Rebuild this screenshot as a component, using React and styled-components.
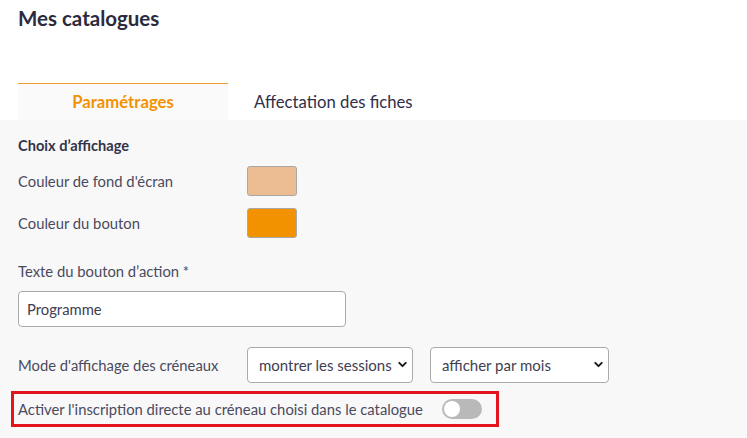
import styled, { createGlobalStyle } from "styled-components";
import { ChevronDown } from "lucide-react";

const GlobalStyle = createGlobalStyle`
  html, body {
    margin: 0;
    padding: 0;
    background: #ffffff;
    font-family: Lato, "Open Sans", sans-serif;
    color: #3e3e52;
  }
  * { box-sizing: border-box; }
`;

const App = () => {
  return (
    <>
      <GlobalStyle />
      <Page>
        <Title>Mes catalogues</Title>
        <Tabs>
          <Tab $active>Paramétrages</Tab>
          <Tab>Affectation des fiches</Tab>
        </Tabs>
        <Panel>
          <SectionTitle>Choix d’affichage</SectionTitle>
          <ColorRow>
            <Label>Couleur de fond d'écran</Label>
            <Swatch $color="#ecbc92" />
          </ColorRow>
          <ColorRow>
            <Label>Couleur du bouton</Label>
            <Swatch $color="#f39200" />
          </ColorRow>
          <FieldBlock>
            <Label>Texte du bouton d’action *</Label>
            <TextInput defaultValue="Programme" />
          </FieldBlock>
          <ModeRow>
            <Label>Mode d'affichage des créneaux</Label>
            <SelectWrap $width={166}>
              <Select defaultValue="sessions">
                <option value="sessions">montrer les sessions</option>
              </Select>
              <Chevron size={13} strokeWidth={3.6} />
            </SelectWrap>
            <SelectWrap $width={179}>
              <Select defaultValue="mois">
                <option value="mois">afficher par mois</option>
              </Select>
              <Chevron size={13} strokeWidth={3.6} />
            </SelectWrap>
          </ModeRow>
          <Highlight>
            <Label>Activer l'inscription directe au créneau choisi dans le catalogue</Label>
            <Toggle />
          </Highlight>
        </Panel>
      </Page>
    </>
  );
};

const Page = styled.div`
  width: 747px;
  height: 438px;
  display: flex;
  flex-direction: column;
  overflow: hidden;
`;

const Title = styled.h1`
  margin: 0;
  padding: 5px 18px 0;
  height: 83px;
  font-size: 20.5px;
  line-height: 26px;
  font-weight: 700;
  color: #2b2b40;
`;

const Tabs = styled.div`
  display: flex;
  padding: 0 18px;
`;

const Tab = styled.div`
  height: 37px;
  display: flex;
  align-items: center;
  justify-content: center;
  font-size: 16.7px;
  padding: ${(p) => (p.$active ? "0" : "0 26px")};
  width: ${(p) => (p.$active ? "210px" : "auto")};
  border-top: 1px solid ${(p) => (p.$active ? "#ee9a30" : "transparent")};
  background: ${(p) => (p.$active ? "#fafafa" : "#ffffff")};
  color: ${(p) => (p.$active ? "#f39200" : "#2f2f48")};
  font-weight: ${(p) => (p.$active ? 700 : 400)};
`;

const Panel = styled.div`
  flex: 1;
  background: #f8f8f8;
  padding: 16px 18px 0;
  display: flex;
  flex-direction: column;
`;

const SectionTitle = styled.div`
  font-size: 14.6px;
  line-height: 20px;
  font-weight: 700;
  color: #33334a;
  margin-bottom: 10px;
`;

const Label = styled.span`
  font-size: 14.8px;
  line-height: 20px;
  color: #4a4a5e;
  white-space: nowrap;
`;

const ColorRow = styled.div`
  display: grid;
  grid-template-columns: 229px 50px;
  align-items: center;
  margin-bottom: 12px;
`;

const Swatch = styled.div`
  width: 50px;
  height: 30px;
  border: 1px solid #a8a8a8;
  border-radius: 3px;
  background: ${(p) => p.$color};
`;

const FieldBlock = styled.div`
  display: flex;
  flex-direction: column;
  gap: 10px;
  margin-top: 11px;
`;

const TextInput = styled.input`
  width: 328px;
  height: 36px;
  border: 1px solid #aaaaaa;
  border-radius: 4px;
  background: #ffffff;
  padding: 0 8px;
  font-family: inherit;
  font-size: 14.8px;
  color: #3e3e52;
  outline: none;
`;

const ModeRow = styled.div`
  display: flex;
  align-items: center;
  margin-top: 20px;

  & > span {
    width: 229px;
  }
  & > div + div {
    margin-left: 17px;
  }
`;

const SelectWrap = styled.div`
  position: relative;
  width: ${(p) => p.$width}px;
  height: 36px;
`;

const Select = styled.select`
  appearance: none;
  width: 100%;
  height: 100%;
  border: 1px solid #aaaaaa;
  border-radius: 4px;
  background: #ffffff;
  padding: 0 16px 0 11px;
  font-family: inherit;
  font-size: 15px;
  color: #3e3e52;
  outline: none;
`;

const Chevron = styled(ChevronDown)`
  position: absolute;
  right: 4px;
  top: 11px;
  color: #1a1a1a;
  pointer-events: none;
`;

const Highlight = styled.div`
  align-self: flex-start;
  display: flex;
  align-items: center;
  gap: 19px;
  margin: 8px 0 0 -7px;
  height: 36px;
  padding: 0 14px 0 4px;
  border: 3px solid #e3141c;
`;

const Toggle = styled.div`
  position: relative;
  width: 40px;
  height: 20px;
  border-radius: 10px;
  background: #b9b9b9;

  &::after {
    content: "";
    position: absolute;
    left: 2px;
    top: 2px;
    width: 16px;
    height: 16px;
    border-radius: 50%;
    background: #ffffff;
  }
`;

export default App;
